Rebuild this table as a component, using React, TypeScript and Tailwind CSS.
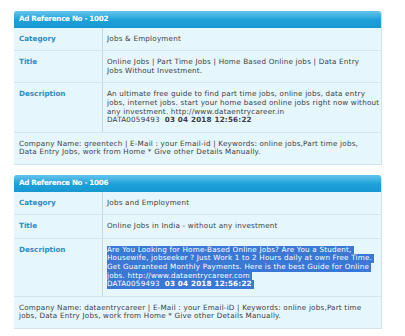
const font = { fontFamily: '"DejaVu Sans", Verdana, sans-serif' };

type Ad = {
  ref: string;
  category: string;
  title: string[];
  description: string[];
  code: string;
  date: string;
  footer: string[];
  selected?: boolean;
};

const ads: Ad[] = [
  {
    ref: '1002',
    category: 'Jobs & Employment',
    title: ['Online Jobs | Part Time Jobs | Home Based Online jobs | Data Entry', 'Jobs Without Investment.'],
    description: [
      'An ultimate free guide to find part time jobs, online jobs, data entry',
      'jobs, internet jobs. start your home based online jobs right now without',
      'any investment. http://www.dataentrycareer.in',
    ],
    code: 'DATA0059493',
    date: '03 04 2018 12:56:22',
    footer: [
      'Company Name: greentech | E-Mail : your Email-id | Keywords: online jobs,Part time jobs,',
      'Data Entry Jobs, work from Home * Give other Details Manually.',
    ],
  },
  {
    ref: '1006',
    category: 'Jobs and Employment',
    title: ['Online Jobs in India - without any investment'],
    description: [
      'Are You Looking for Home-Based Online Jobs? Are You a Student,',
      'Housewife, jobseeker ? Just Work 1 to 2 Hours daily at own Free Time.',
      'Get Guaranteed Monthly Payments. Here is the best Guide for Online',
      'jobs. http://www.dataentrycareer.com',
    ],
    code: 'DATA0059493',
    date: '03 04 2018 12:56:22',
    footer: [
      'Company Name: dataentrycareer | E-Mail : your Email-iD | Keywords: online jobs,Part time',
      'jobs, Data Entry Jobs, work from Home * Give other Details Manually.',
    ],
    selected: true,
  },
];

function Row({ label, children }: { label: string; children: React.ReactNode }) {
  return (
    <div className="grid grid-cols-[89px_1fr] border-b border-[#d3e6ee]">
      <div className="border-r border-[#c4d9e2] py-[7px] pl-[5px] font-bold tracking-normal text-[#2a8dc8]">{label}</div>
      <div className="py-[7px] pl-[4px] pr-1 text-[#3d3d3d]">{children}</div>
    </div>
  );
}

function AdCard({ ad }: { ad: Ad }) {
  const line = ad.selected ? 'w-fit bg-[#3a78d6] pr-[2px] text-white' : '';
  return (
    <div className="w-[368px] rounded-t-[3px] border-r border-b border-[#d5e3e8] bg-[#e6f6fd]">
      <div className="rounded-t-[3px] bg-gradient-to-b from-[#62c5ec] via-[#1ea2da] to-[#1797d0] py-[4px] pl-[5px] font-bold tracking-[-0.3px] text-white">
        Ad Reference No - {ad.ref}
      </div>
      <Row label="Category">{ad.category}</Row>
      <Row label="Title">
        {ad.title.map((t) => (
          <div key={t}>{t}</div>
        ))}
      </Row>
      <Row label="Description">
        {ad.description.map((t) => (
          <div key={t} className={line}>
            {t}
          </div>
        ))}
        <div className={line}>
          {ad.code}&nbsp;&nbsp;<b>{ad.date}</b>
        </div>
      </Row>
      <div className="py-[7px] pl-[5px] text-[#3d3d3d]">
        {ad.footer.map((t) => (
          <div key={t}>{t}</div>
        ))}
      </div>
    </div>
  );
}

export default function App() {
  return (
    <div className="flex min-h-[336px] flex-col gap-[10px] bg-white pl-[14px] pt-[11px] text-[7.2px] leading-[8.6px] tracking-[0.2px] whitespace-nowrap" style={font}>
      {ads.map((ad) => (
        <AdCard key={ad.ref} ad={ad} />
      ))}
    </div>
  );
}
